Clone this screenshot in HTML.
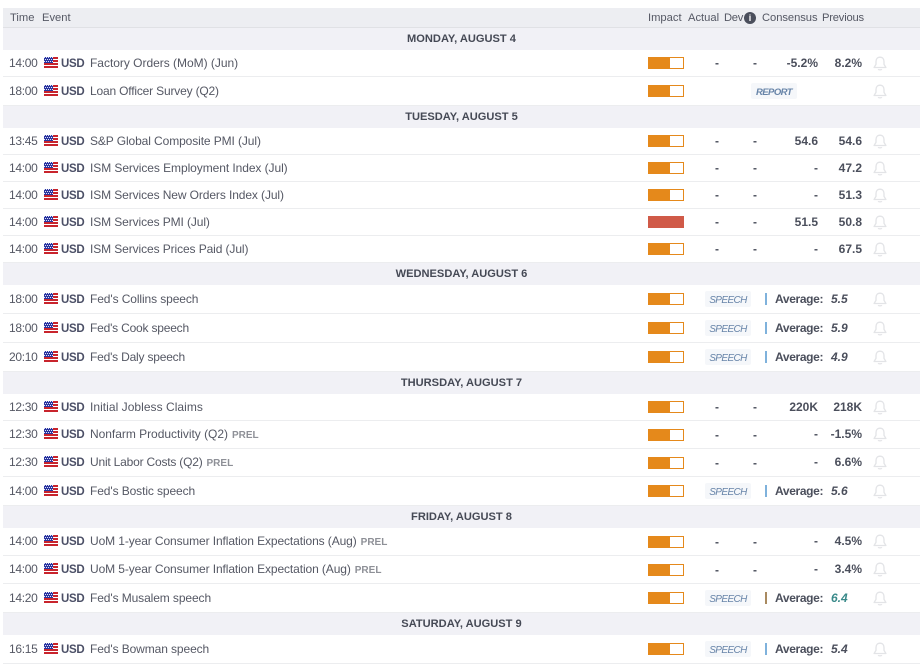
<!DOCTYPE html>
<html><head><meta charset="utf-8"><style>
html,body{margin:0;padding:0;background:#fff}
body{width:922px;height:667px;position:relative;overflow:hidden;font-family:"Liberation Sans",sans-serif;font-size:12px;color:#4b4f5c}
svg.defs{position:absolute;width:0;height:0}
.h{position:absolute;left:3px;width:917px;top:8px;height:19px;background:#edeef2;border-bottom:1px solid #e0e1e5}
.h span{position:absolute;top:0;line-height:21px;font-size:11.2px;color:#555864;white-space:nowrap}
.d{position:absolute;left:3px;width:917px;height:22px;background:#f1f1f6;line-height:23px;text-align:center;font-weight:bold;font-size:11.1px;color:#454955}
.r{position:absolute;left:3px;width:917px;background:#fff;border-bottom:1px solid #ecedef}
.r>*{position:absolute;top:0;bottom:0;margin:auto 0;white-space:nowrap}
.r span{height:16px;line-height:16px}
.t{left:6px;color:#555864;letter-spacing:-.3px}
.r svg.f{left:41px;width:14px;height:11px;top:7px;bottom:auto;margin:0}
.r[style*="height:28px"] svg.f{top:8px}
.c{left:58px;font-weight:bold;color:#4b4f66;font-size:11.5px;letter-spacing:-.3px;transform:translateY(1px)}
.e{left:87px;color:#555864;letter-spacing:-.1px}
.p{font-size:10px;font-weight:bold;color:#8e9097;margin-left:4px;letter-spacing:0}
.b{left:645px;width:34px;height:10px;border:1px solid #e5891b;background:linear-gradient(90deg,#e5891b 62%,#fff 62%)}
.hi{background:#d05a48;border-color:#d05a48}
.a{left:704px;width:20px;text-align:center;font-weight:bold}
.v{left:742px;width:20px;text-align:center;font-weight:bold}
.n{right:102px;font-weight:bold}
.o{right:58px;font-weight:bold}
.k{width:46px;height:17px;line-height:19px!important;background:#f5f7fa;text-align:center;font-size:10px;font-style:italic;color:#6784a8;border-radius:2px;letter-spacing:-.6px}
.s{left:702px}.rp{left:748px;font-weight:bold;font-size:9.5px;letter-spacing:-.55px}
.pipe{left:762px;width:2px;height:12px;background:#7fb2dc}
.l{left:772px;font-weight:bold;letter-spacing:-.35px}
.m{left:828px;font-weight:bold;font-style:italic}
.r svg.w{left:870px;width:14px;height:15px;top:6px;bottom:auto;margin:0}
.r[style*="height:28px"] svg.w{top:7px}
.u .t,.u .c,.u .e,.u .n,.u .o{top:-1px;bottom:1px}
</style></head><body>
<svg class="defs"><defs>
<symbol id="flag" viewBox="0 0 14 11"><rect width="14" height="11" fill="#fff"/><g fill="#c8242c" shape-rendering="crispEdges"><rect y="0" width="14" height="2"/><rect y="3" width="14" height="2"/><rect y="6" width="14" height="2"/><rect y="9" width="14" height="2"/></g><rect width="9" height="6" fill="#2a35a0" shape-rendering="crispEdges"/><g stroke="#dfe3f7" stroke-width="1" stroke-dasharray="1 1" shape-rendering="crispEdges"><path d="M0 .5h9M1 2.5h8M0 4.5h9"/></g></symbol>
<symbol id="bell" viewBox="0 0 14 15"><path d="M7 1.2c-2.7 0-4 2-4 4.4v2.7L1.1 11.5h11.8L11 8.3V5.6c0-2.4-1.3-4.4-4-4.4z" fill="none" stroke="#e3e4e7" stroke-width="1.35" stroke-linejoin="round"/><path d="M5.2 13.2c.5.9 3.1.9 3.6 0" fill="none" stroke="#e3e4e7" stroke-width="1.35"/></symbol>
</defs></svg>

<div class="h"><span style="left:7px">Time</span><span style="left:39px">Event</span><span style="left:645px">Impact</span><span style="left:685px">Actual</span><span style="left:721px;letter-spacing:-.3px">Dev</span><span style="left:741px;top:4px;width:12px;height:12px;line-height:12px;border-radius:50%;background:#4b4f5c;color:#fff;text-align:center;font-size:9px;font-weight:bold">i</span><span style="left:759px;letter-spacing:-.05px">Consensus</span><span style="left:819px;letter-spacing:-.2px">Previous</span></div>

<div class="d" style="top:28px">MONDAY, AUGUST 4</div>
<div class="r" style="top:50px;height:26px"><span class="t">14:00</span><svg class="f"><use href="#flag"/></svg><span class="c">USD</span><span class="e" style="letter-spacing:-.02px">Factory Orders (MoM) (Jun)</span><i class="b"></i><span class="a">-</span><span class="v">-</span><span class="n">-5.2%</span><span class="o">8.2%</span><svg class="w"><use href="#bell"/></svg></div>
<div class="r" style="top:77px;height:28px"><span class="t">18:00</span><svg class="f"><use href="#flag"/></svg><span class="c">USD</span><span class="e" style="letter-spacing:-.18px">Loan Officer Survey (Q2)</span><i class="b"></i><span class="k rp">REPORT</span><svg class="w"><use href="#bell"/></svg></div>

<div class="d" style="top:106px">TUESDAY, AUGUST 5</div>
<div class="r" style="top:128px;height:26px"><span class="t">13:45</span><svg class="f"><use href="#flag"/></svg><span class="c">USD</span><span class="e">S&amp;P Global Composite PMI (Jul)</span><i class="b"></i><span class="a">-</span><span class="v">-</span><span class="n">54.6</span><span class="o">54.6</span><svg class="w"><use href="#bell"/></svg></div>
<div class="r" style="top:155px;height:26px"><span class="t">14:00</span><svg class="f"><use href="#flag"/></svg><span class="c">USD</span><span class="e" style="letter-spacing:-.07px">ISM Services Employment Index (Jul)</span><i class="b"></i><span class="a">-</span><span class="v">-</span><span class="n">-</span><span class="o">47.2</span><svg class="w"><use href="#bell"/></svg></div>
<div class="r" style="top:182px;height:26px"><span class="t">14:00</span><svg class="f"><use href="#flag"/></svg><span class="c">USD</span><span class="e">ISM Services New Orders Index (Jul)</span><i class="b"></i><span class="a">-</span><span class="v">-</span><span class="n">-</span><span class="o">51.3</span><svg class="w"><use href="#bell"/></svg></div>
<div class="r" style="top:209px;height:26px"><span class="t">14:00</span><svg class="f"><use href="#flag"/></svg><span class="c">USD</span><span class="e">ISM Services PMI (Jul)</span><i class="b hi"></i><span class="a">-</span><span class="v">-</span><span class="n">51.5</span><span class="o">50.8</span><svg class="w"><use href="#bell"/></svg></div>
<div class="r" style="top:236px;height:26px"><span class="t">14:00</span><svg class="f"><use href="#flag"/></svg><span class="c">USD</span><span class="e">ISM Services Prices Paid (Jul)</span><i class="b"></i><span class="a">-</span><span class="v">-</span><span class="n">-</span><span class="o">67.5</span><svg class="w"><use href="#bell"/></svg></div>

<div class="d" style="top:263px">WEDNESDAY, AUGUST 6</div>
<div class="r" style="top:285px;height:28px"><span class="t">18:00</span><svg class="f"><use href="#flag"/></svg><span class="c">USD</span><span class="e">Fed's Collins speech</span><i class="b"></i><span class="k s">SPEECH</span><i class="pipe"></i><span class="l">Average:</span><span class="m">5.5</span><svg class="w"><use href="#bell"/></svg></div>
<div class="r" style="top:314px;height:28px"><span class="t">18:00</span><svg class="f"><use href="#flag"/></svg><span class="c">USD</span><span class="e" style="letter-spacing:-.2px">Fed's Cook speech</span><i class="b"></i><span class="k s">SPEECH</span><i class="pipe"></i><span class="l">Average:</span><span class="m">5.9</span><svg class="w"><use href="#bell"/></svg></div>
<div class="r" style="top:343px;height:28px"><span class="t">20:10</span><svg class="f"><use href="#flag"/></svg><span class="c">USD</span><span class="e" style="letter-spacing:-.2px">Fed's Daly speech</span><i class="b"></i><span class="k s">SPEECH</span><i class="pipe"></i><span class="l">Average:</span><span class="m">4.9</span><svg class="w"><use href="#bell"/></svg></div>

<div class="d" style="top:372px">THURSDAY, AUGUST 7</div>
<div class="r" style="top:394px;height:26px"><span class="t">12:30</span><svg class="f"><use href="#flag"/></svg><span class="c">USD</span><span class="e" style="letter-spacing:.04px">Initial Jobless Claims</span><i class="b"></i><span class="a">-</span><span class="v">-</span><span class="n">220K</span><span class="o">218K</span><svg class="w"><use href="#bell"/></svg></div>
<div class="r u" style="top:421px;height:27px"><span class="t">12:30</span><svg class="f"><use href="#flag"/></svg><span class="c">USD</span><span class="e" style="letter-spacing:-.03px">Nonfarm Productivity (Q2)<b class="p">PREL</b></span><i class="b"></i><span class="a">-</span><span class="v">-</span><span class="n">-</span><span class="o">-1.5%</span><svg class="w"><use href="#bell"/></svg></div>
<div class="r u" style="top:449px;height:27px"><span class="t">12:30</span><svg class="f"><use href="#flag"/></svg><span class="c">USD</span><span class="e" style="letter-spacing:-.2px">Unit Labor Costs (Q2)<b class="p">PREL</b></span><i class="b"></i><span class="a">-</span><span class="v">-</span><span class="n">-</span><span class="o">6.6%</span><svg class="w"><use href="#bell"/></svg></div>
<div class="r" style="top:477px;height:28px"><span class="t">14:00</span><svg class="f"><use href="#flag"/></svg><span class="c">USD</span><span class="e">Fed's Bostic speech</span><i class="b"></i><span class="k s">SPEECH</span><i class="pipe"></i><span class="l">Average:</span><span class="m">5.6</span><svg class="w"><use href="#bell"/></svg></div>

<div class="d" style="top:506px">FRIDAY, AUGUST 8</div>
<div class="r u" style="top:528px;height:27px"><span class="t">14:00</span><svg class="f"><use href="#flag"/></svg><span class="c">USD</span><span class="e">UoM 1-year Consumer Inflation Expectations (Aug)<b class="p">PREL</b></span><i class="b"></i><span class="a">-</span><span class="v">-</span><span class="n">-</span><span class="o">4.5%</span><svg class="w"><use href="#bell"/></svg></div>
<div class="r u" style="top:556px;height:27px"><span class="t">14:00</span><svg class="f"><use href="#flag"/></svg><span class="c">USD</span><span class="e">UoM 5-year Consumer Inflation Expectation (Aug)<b class="p">PREL</b></span><i class="b"></i><span class="a">-</span><span class="v">-</span><span class="n">-</span><span class="o">3.4%</span><svg class="w"><use href="#bell"/></svg></div>
<div class="r" style="top:584px;height:28px"><span class="t">14:20</span><svg class="f"><use href="#flag"/></svg><span class="c">USD</span><span class="e">Fed's Musalem speech</span><i class="b"></i><span class="k s">SPEECH</span><i class="pipe" style="background:#a98a60"></i><span class="l">Average:</span><span class="m" style="color:#3a8a8a">6.4</span><svg class="w"><use href="#bell"/></svg></div>

<div class="d" style="top:613px">SATURDAY, AUGUST 9</div>
<div class="r" style="top:635px;height:28px"><span class="t">16:15</span><svg class="f"><use href="#flag"/></svg><span class="c">USD</span><span class="e">Fed's Bowman speech</span><i class="b"></i><span class="k s">SPEECH</span><i class="pipe"></i><span class="l">Average:</span><span class="m">5.4</span><svg class="w"><use href="#bell"/></svg></div>
</body></html>
